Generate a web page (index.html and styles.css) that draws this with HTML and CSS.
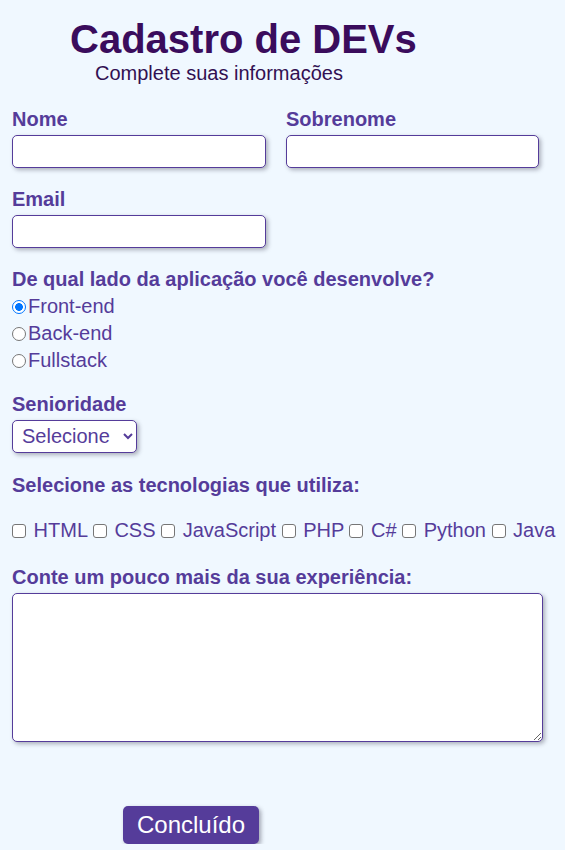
FILE: index.html
```html
<!DOCTYPE html>
<html lang="pt-BR">
<head>
<meta charset="utf-8">
<title>Cadastro de DEVs</title>
<link rel="stylesheet" href="styles.css">
</head>
<body>
<header class="header">
  <h1 class="title">Cadastro de DEVs</h1>
  <p class="subtitle">Complete suas informações</p>
</header>
<form class="form">
  <div class="row-two">
    <div class="field">
      <label class="label" for="nome">Nome</label>
      <input class="text-input" id="nome" type="text">
    </div>
    <div class="field">
      <label class="label" for="sobrenome">Sobrenome</label>
      <input class="text-input" id="sobrenome" type="text">
    </div>
  </div>
  <div class="field field-email">
    <label class="label" for="email">Email</label>
    <input class="text-input email-input" id="email" type="email">
  </div>
  <div class="group group-side">
    <p class="label">De qual lado da aplicação você desenvolve?</p>
    <div class="radio-line"><input class="radio" type="radio" name="lado" checked><span>Front-end</span></div>
    <div class="radio-line"><input class="radio" type="radio" name="lado"><span>Back-end</span></div>
    <div class="radio-line"><input class="radio" type="radio" name="lado"><span>Fullstack</span></div>
  </div>
  <div class="group group-senior">
    <label class="label" for="senioridade">Senioridade</label>
    <select class="select" id="senioridade">
      <option>Selecione</option>
      <option>Júnior</option>
      <option>Pleno</option>
      <option>Sênior</option>
    </select>
  </div>
  <div class="group group-tech">
    <p class="label">Selecione as tecnologias que utiliza:</p>
    <div class="tech-row"><label class="tech"><input class="check" type="checkbox"> HTML</label> <label class="tech"><input class="check" type="checkbox"> CSS</label> <label class="tech"><input class="check" type="checkbox"> JavaScript</label> <label class="tech"><input class="check" type="checkbox"> PHP</label> <label class="tech"><input class="check" type="checkbox"> C#</label> <label class="tech"><input class="check" type="checkbox"> Python</label> <label class="tech"><input class="check" type="checkbox"> Java</label></div>
  </div>
  <div class="group group-exp">
    <label class="label label-exp" for="exp">Conte um pouco mais da sua experiência:</label>
    <textarea class="textarea" id="exp"></textarea>
  </div>
  <div class="actions">
    <button class="button" type="button">Concluído</button>
  </div>
</form>
</body>
</html>
```
FILE: styles.css
```css
* { box-sizing: border-box; }

html, body {
  margin: 0;
  padding: 0;
}

body {
  background: #f0f8ff;
  font-family: "Liberation Sans", Arial, sans-serif;
  color: #553c9a;
}

.header {
  padding: 16px 0 0 70px;
}

.title {
  margin: 0;
  font-size: 40px;
  line-height: 46px;
  font-weight: bold;
  color: #3a0c5c;
}

.subtitle {
  margin: 0 0 0 25px;
  font-size: 20px;
  line-height: 23px;
  color: #321052;
}

.form {
  padding: 23px 12px 0 12px;
  display: flex;
  flex-direction: column;
}

.row-two {
  display: grid;
  grid-template-columns: 254px 253px;
  column-gap: 20px;
}

.field {
  display: flex;
  flex-direction: column;
}

.label {
  display: block;
  margin: 0 0 4px 0;
  font-size: 20px;
  line-height: 23px;
  font-weight: bold;
  color: #553c9a;
}

.text-input {
  height: 33px;
  width: 100%;
  border: 1px solid #553c9a;
  border-radius: 5px;
  background: #fff;
  box-shadow: 2px 2px 4px rgba(40, 40, 60, 0.35);
  font-size: 18px;
  padding: 2px 6px;
  outline: none;
}

.field-email {
  margin-top: 19.5px;
  width: 254px;
}

.group-side {
  margin-top: 20.5px;
}

.group-side .label {
  margin-bottom: 2px;
}

.radio-line {
  display: flex;
  align-items: center;
  height: 27px;
  font-size: 20px;
  color: #553c9a;
}

.radio {
  appearance: none;
  -webkit-appearance: none;
  flex: none;
  width: 14px;
  height: 14px;
  margin: 0 2px 0 0;
  border: 1px solid #767676;
  border-radius: 50%;
  background: #fff;
}

.radio:checked {
  border: 1.5px solid #0075ff;
  background: radial-gradient(circle, #0075ff 0 3.6px, #fff 4.1px);
}

.group-senior {
  margin-top: 18.5px;
}

.select {
  height: 33px;
  width: 125px;
  border: 1px solid #553c9a;
  border-radius: 5px;
  background: #fff;
  box-shadow: 2px 2px 4px rgba(40, 40, 60, 0.35);
  font-family: "Liberation Sans", Arial, sans-serif;
  font-size: 20px;
  color: #553c9a;
  padding: 0 4px 0 5px;
  outline: none;
}

.group-tech {
  margin-top: 21.5px;
}

.group-tech .label {
  margin-bottom: 21.5px;
}

.tech-row {
  font-size: 20px;
  line-height: 23px;
  white-space: nowrap;
  color: #553c9a;
}

.tech {
  white-space: nowrap;
}

.check {
  appearance: none;
  -webkit-appearance: none;
  width: 14px;
  height: 14px;
  margin: 0 2px 0 0;
  border: 1px solid #767676;
  border-radius: 3px;
  background: #fff;
  vertical-align: -1px;
}

.group-exp {
  margin-top: 24.5px;
}

.label-exp {
  margin-bottom: 3.5px;
}

.textarea {
  display: block;
  width: 531px;
  height: 149px;
  border: 1px solid #553c9a;
  border-radius: 5px;
  background: #fff;
  box-shadow: 2px 2px 4px rgba(40, 40, 60, 0.35);
  outline: none;
  resize: both;
}

.actions {
  margin-top: 64px;
  padding-left: 111px;
}

.button {
  width: 136px;
  height: 38px;
  border: none;
  border-radius: 5px;
  background: #553c9a;
  color: #fff;
  font-family: "Liberation Sans", Arial, sans-serif;
  font-size: 24px;
  box-shadow: 2px 2px 4px rgba(40, 40, 60, 0.4);
  padding: 0;
}
```
